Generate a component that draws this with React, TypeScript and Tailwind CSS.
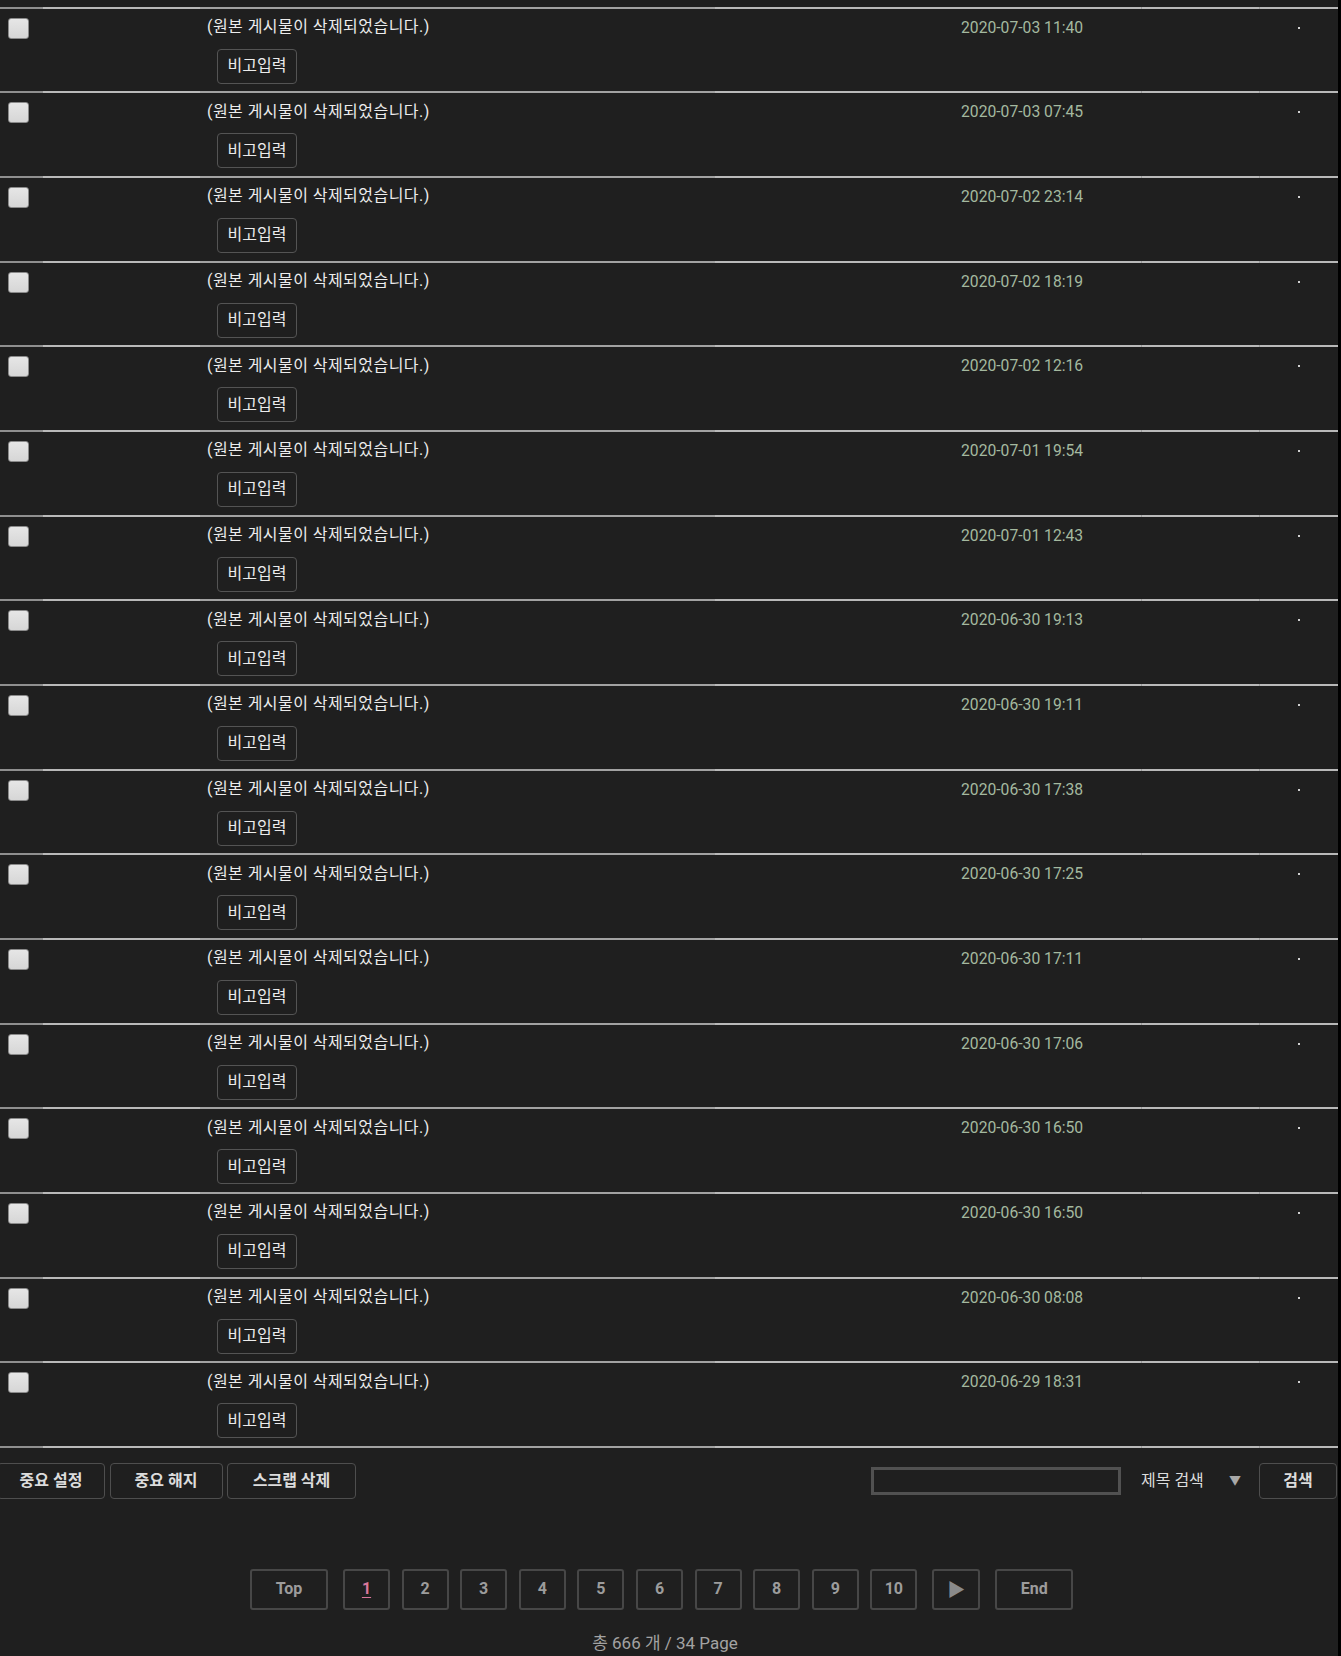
import React from "react";

const dates = [
  "2020-07-03 11:40",
  "2020-07-03 07:45",
  "2020-07-02 23:14",
  "2020-07-02 18:19",
  "2020-07-02 12:16",
  "2020-07-01 19:54",
  "2020-07-01 12:43",
  "2020-06-30 19:13",
  "2020-06-30 19:11",
  "2020-06-30 17:38",
  "2020-06-30 17:25",
  "2020-06-30 17:11",
  "2020-06-30 17:06",
  "2020-06-30 16:50",
  "2020-06-30 16:50",
  "2020-06-30 08:08",
  "2020-06-29 18:31",
];

function Line() {
  return (
    <div className="flex h-[2px] w-full">
      <div className="w-[43px] bg-[#8f8f8f]" />
      <div className="w-[157px] bg-[#b9b9b9]" />
      <div className="w-[515px] bg-[#a2a2a2]" />
      <div className="w-[426px] bg-[#b9b9b9]" />
      <div className="w-[1px] bg-[#9a9a9a]" />
      <div className="w-[117px] bg-[#b9b9b9]" />
      <div className="w-[1px] bg-[#9a9a9a]" />
      <div className="flex-1 bg-[#b9b9b9]" />
    </div>
  );
}

function Row({ date }: { date: string }) {
  return (
    <div className="flex flex-col h-[84.68px]">
      <Line />
      <div className="flex flex-1">
        <div className="w-[43px] pl-[8px] pt-[9px]">
          <div className="w-[21px] h-[21px] rounded-[3px] border border-[#8a8a8a] bg-gradient-to-b from-[#e6e6e6] to-[#d6d6d6]" />
        </div>
        <div className="w-[157px]" />
        <div className="w-[761px] pt-[7.5px]">
          <div className="pl-[7px] text-[16px] leading-[22px] tracking-[0.45px] text-[#ececec]">
            (원본 게시물이 삭제되었습니다.)
          </div>
          <div className="pl-[17px] mt-[10.5px]">
            <div className="w-[80px] h-[35px] rounded-[4px] border border-[#545454] flex items-center justify-center text-[16px] text-[#ececec]">
              비고입력
            </div>
          </div>
        </div>
        <div className="w-[337px] pt-[8px] text-[15.7px] leading-[22px] text-[#a4b99f]">
          {date}
        </div>
        <div className="pt-[18px]">
          <div className="w-[2px] h-[2px] bg-[#d0d0d0]" />
        </div>
      </div>
    </div>
  );
}

function PageBtn({
  children,
  w = "w-[47px]",
  active = false,
}: {
  children: React.ReactNode;
  w?: string;
  active?: boolean;
}) {
  return (
    <div
      className={`${w} h-[41px] rounded-[3px] border-2 border-[#474747] flex items-center justify-center text-[16px] font-bold ${
        active ? "text-[#d9779b] underline underline-offset-[3px]" : "text-[#9c9c9c]"
      }`}
    >
      {children}
    </div>
  );
}

export default function App() {
  return (
    <div
      className="w-full min-h-[1656px] bg-black"
      style={{ fontFamily: 'Roboto, "Noto Sans CJK KR", sans-serif' }}
    >
      <div className="w-[1338px] min-h-[1656px] bg-[#1f1f1f] overflow-hidden">
        <div className="h-[6.5px]" />
        {dates.map((d, i) => (
          <Row key={i} date={d} />
        ))}
        <Line />

        {/* controls */}
        <div className="flex items-center mt-[15px] h-[36px]">
          <div className="flex gap-[4.5px] ml-[-3px]">
            <div className="w-[108px] h-[36px] rounded-[4px] border border-[#4e4e4e] flex items-center justify-center text-[16px] font-bold text-[#dcdcdc]">
              중요 설정
            </div>
            <div className="w-[113px] h-[36px] rounded-[4px] border border-[#4e4e4e] flex items-center justify-center text-[16px] font-bold text-[#dcdcdc]">
              중요 해지
            </div>
            <div className="w-[129px] h-[36px] rounded-[4px] border border-[#4e4e4e] flex items-center justify-center text-[16px] font-bold text-[#dcdcdc]">
              스크랩 삭제
            </div>
          </div>
          <div className="flex-1" />
          <div className="w-[250px] h-[28px] border-[3px] border-[#515151] bg-[#1f1f1f]" />
          <div className="ml-[20px] w-[80px] text-[16px] text-[#dcdcdc]">제목 검색</div>
          <div className="ml-[8px] text-[12px] text-[#a8a8a8]">▼</div>
          <div className="ml-[18px] w-[78px] h-[36px] rounded-[4px] border border-[#4e4e4e] flex items-center justify-center text-[16px] font-bold text-[#dcdcdc] mr-[1px]">
            검색
          </div>
        </div>

        {/* pagination */}
        <div className="flex items-center mt-[70px] ml-[250px]">
          <PageBtn w="w-[78px]">Top</PageBtn>
          <div className="ml-[15px] flex gap-[11.6px]">
            <PageBtn active>1</PageBtn>
            <PageBtn>2</PageBtn>
            <PageBtn>3</PageBtn>
            <PageBtn>4</PageBtn>
            <PageBtn>5</PageBtn>
            <PageBtn>6</PageBtn>
            <PageBtn>7</PageBtn>
            <PageBtn>8</PageBtn>
            <PageBtn>9</PageBtn>
            <PageBtn>10</PageBtn>
          </div>
          <div className="ml-[15px]">
            <PageBtn w="w-[48px]">
              <span className="text-[18px] text-[#8a8a8a]">▶</span>
            </PageBtn>
          </div>
          <div className="ml-[15px]">
            <PageBtn w="w-[78px]">End</PageBtn>
          </div>
        </div>

        <div className="mt-[22px] text-center text-[17px] leading-[22px] text-[#a3a3a3] pr-[8px]">
          총 666 개 / 34 Page
        </div>
      </div>
    </div>
  );
}
